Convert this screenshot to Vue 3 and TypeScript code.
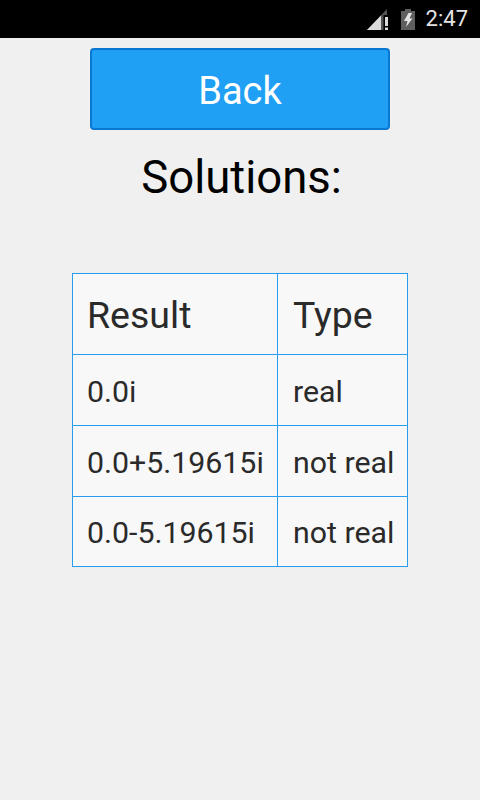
<script setup lang="ts">
interface Row { result: string; type: string }
const rows: Row[] = [
  { result: '0.0i', type: 'real' },
  { result: '0.0+5.19615i', type: 'not real' },
  { result: '0.0-5.19615i', type: 'not real' },
]
</script>

<template>
  <div class="screen">
    <header class="status">
      <svg class="signal" width="21" height="21" viewBox="0 0 21 21">
        <polygon points="0,21 20,0 20,6 16.5,6 16.5,21" fill="#555" />
        <polygon points="0,21 14,6.5 14,21" fill="#dcdcdc" />
        <rect x="18" y="8" width="3" height="9" fill="#dcdcdc" />
        <rect x="18" y="18.5" width="3" height="2.5" fill="#dcdcdc" />
      </svg>
      <svg class="battery" width="14" height="21" viewBox="0 0 14 21">
        <rect x="4" y="0" width="6" height="2" fill="#5e5e5e" />
        <rect x="0" y="2" width="14" height="19" fill="#5e5e5e" />
        <polygon points="7.5,4 11,4 8.5,9.5 11.5,9.5 5,18 6.5,12 3,12" fill="#e4e4e4" />
      </svg>
      <span class="clock">2:47</span>
    </header>
    <main class="content">
      <button class="back" type="button"><span class="back-label">Back</span></button>
      <h1 class="title">Solutions:</h1>
      <table class="solutions">
        <colgroup>
          <col class="col-a" />
          <col class="col-b" />
        </colgroup>
        <thead>
          <tr class="head">
            <th>Result</th>
            <th>Type</th>
          </tr>
        </thead>
        <tbody>
          <tr v-for="row in rows" :key="row.result" class="line">
            <td>{{ row.result }}</td>
            <td>{{ row.type }}</td>
          </tr>
        </tbody>
      </table>
    </main>
  </div>
</template>

<style scoped>
.screen {
  width: 480px;
  height: 800px;
  background: #f0f0f0;
  font-family: Roboto, "Liberation Sans", sans-serif;
  overflow: hidden;
}
.status {
  height: 38px;
  background: #000;
  display: flex;
  align-items: center;
  justify-content: flex-end;
  padding-right: 12px;
  box-sizing: border-box;
}
.signal { margin-right: 13px; margin-top: 1px; }
.battery { margin-right: 11px; margin-top: 1px; }
.clock {
  color: #e4e4e4;
  font-size: 22px;
  line-height: 38px;
}
.content {
  display: flex;
  flex-direction: column;
  align-items: center;
  padding-top: 10px;
}
.back {
  width: 300px;
  height: 82px;
  box-sizing: border-box;
  background: #20a0f4;
  border: 2px solid #0a78d0;
  border-radius: 4px;
  color: #fff;
  font-family: inherit;
  font-size: 38px;
  padding: 4px 0 0;
}
.title {
  margin: 21px 0 0;
  padding-left: 3px;
  height: 54px;
  font-size: 45.5px;
  line-height: 54px;
  font-weight: 400;
  color: #000;
}
.solutions {
  margin-top: 68px;
  width: 336px;
  table-layout: fixed;
  border-collapse: collapse;
  background: #f8f8f8;
  color: #2a2a2a;
}
.col-a { width: 205px; }
th, td {
  border: 1px solid #259cee;
  padding: 2px 0 0 15px;
  text-align: left;
  font-weight: 400;
  white-space: nowrap;
}
th:first-child, td:first-child { padding-left: 14px; }
th { font-size: 37.5px; }
td { font-size: 30.3px; }
.head { height: 81px; }
.line { height: 71px; }
.line:last-child { height: 70px; }
</style>
